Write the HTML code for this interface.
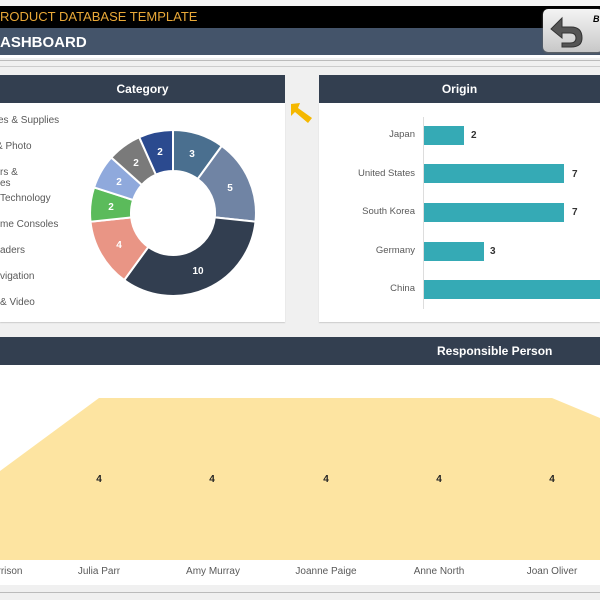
<!DOCTYPE html>
<html><head><style>
body{margin:0;width:600px;height:600px;overflow:hidden;background:#f0f0f0;font-family:"Liberation Sans",sans-serif;position:relative}
.a{position:absolute}
.hd{background:#333f50;color:#fff;font-weight:bold;font-size:12px;text-align:center;line-height:28px}
.lg{position:absolute;font-size:10px;color:#595959;white-space:nowrap}
.bl{position:absolute;font-size:9.5px;color:#595959;text-align:right;width:90px;left:325px}
.bar{position:absolute;background:#35aab5;height:19px;left:424px}
.bv{position:absolute;font-size:10px;font-weight:bold;color:#333}
.pn{position:absolute;font-size:10px;color:#595959;width:100px;text-align:center;top:566px}
.v4{position:absolute;font-size:10px;font-weight:bold;color:#222;top:474px;width:20px;text-align:center}
</style></head><body>
<div class="a" style="left:0;top:0;width:600px;height:6px;background:#f4f4f4"></div>
<div class="a" style="left:0;top:6px;width:600px;height:22px;background:#000;color:#e8a838;font-size:13px;line-height:22px;text-indent:0">RODUCT DATABASE TEMPLATE</div>
<div class="a" style="left:0;top:28px;width:600px;height:27px;background:#44546a;color:#fff;font-size:15px;font-weight:bold;line-height:29px">ASHBOARD</div>
<div class="a" style="left:0;top:55px;width:600px;height:3px;background:#fff"></div>
<div class="a" style="left:0;top:60px;width:600px;height:1px;background:#bbb"></div>
<div class="a" style="left:0;top:66px;width:600px;height:1px;background:#ccc"></div>
<div class="a" style="left:543px;top:9px;width:60px;height:43px;border-radius:5px;background:linear-gradient(#f4f4f4,#c8c8c8);box-shadow:0 1px 2px #666"></div>
<svg class="a" style="left:548px;top:12px" width="40" height="38"><path d="M14 6 L3 17 L14 26 L14 21 L22 21 Q28 21 28 26 Q28 31 22 31 L14 31 L14 35 L23 35 Q34 35 34 26 Q34 15 23 15 L14 15 Z" fill="#555" stroke="#333" stroke-width="1"/></svg>
<div class="a" style="left:593px;top:14px;font-size:9px;font-weight:bold;font-style:italic">B</div>

<div class="a hd" style="left:0;top:75px;width:285px;height:28px">Category</div>
<div class="a" style="left:0;top:103px;width:285px;height:219px;background:#fff;box-shadow:0 1px 1px #ccc"></div>
<div class="lg" style="left:-2px;top:115px">es &amp; Supplies</div>
<div class="lg" style="left:-4px;top:141px">&amp; Photo</div>
<div class="lg" style="left:0;top:167px">rs &amp;</div>
<div class="lg" style="left:0;top:178px">es</div>
<div class="lg" style="left:0;top:193px">Technology</div>
<div class="lg" style="left:0;top:219px">me Consoles</div>
<div class="lg" style="left:0;top:245px">aders</div>
<div class="lg" style="left:0;top:271px">vigation</div>
<div class="lg" style="left:0;top:297px">&amp; Video</div>
<svg class="a" style="left:0;top:0" width="318" height="330" font-family="Liberation Sans" font-size="10" font-weight="bold" fill="#fff" text-anchor="middle">
<g stroke="#fff" stroke-width="2">
<path d="M173 130 A83 83 0 0 1 221.8 145.9 L197.7 179 A42 42 0 0 0 173 171Z" fill="#4a6f8f"/>
<path d="M221.8 145.9 A83 83 0 0 1 255.5 221.7 L214.8 217.4 A42 42 0 0 0 197.7 179Z" fill="#7084a4"/>
<path d="M255.5 221.7 A83 83 0 0 1 124.2 280.1 L148.3 247 A42 42 0 0 0 214.8 217.4Z" fill="#323e50"/>
<path d="M124.2 280.1 A83 83 0 0 1 90.5 221.7 L131.2 217.4 A42 42 0 0 0 148.3 247Z" fill="#e99585"/>
<path d="M90.5 221.7 A83 83 0 0 1 94.1 187.4 L133.1 200 A42 42 0 0 0 131.2 217.4Z" fill="#5bbb5b"/>
<path d="M94.1 187.4 A83 83 0 0 1 111.3 157.5 L141.8 184.9 A42 42 0 0 0 133.1 200Z" fill="#8fa9dc"/>
<path d="M111.3 157.5 A83 83 0 0 1 139.2 137.2 L155.9 174.6 A42 42 0 0 0 141.8 184.9Z" fill="#7a7a7a"/>
<path d="M139.2 137.2 A83 83 0 0 1 173 130 L173 171 A42 42 0 0 0 155.9 174.6Z" fill="#2b4a8f"/>
</g>
<text x="192" y="157">3</text><text x="230" y="191">5</text><text x="198" y="274">10</text><text x="119" y="248">4</text><text x="111" y="210">2</text><text x="119" y="185">2</text><text x="136" y="166">2</text><text x="160" y="155">2</text>
<path d="M291 104 L300 103 L298 108 L312 118 L308 123 L295 112 L291 116 Z" fill="#f5b800"/>
</svg>

<div class="a hd" style="left:319px;top:75px;width:281px;height:28px">Origin</div>
<div class="a" style="left:319px;top:103px;width:281px;height:219px;background:#fff;box-shadow:0 1px 1px #ccc"></div>
<div class="a" style="left:423px;top:117px;width:1px;height:192px;background:#ddd"></div>
<div class="bl" style="top:129px">Japan</div><div class="bar" style="top:126px;width:40px"></div><div class="bv" style="left:471px;top:130px">2</div>
<div class="bl" style="top:168px">United States</div><div class="bar" style="top:164px;width:140px"></div><div class="bv" style="left:572px;top:169px">7</div>
<div class="bl" style="top:206px">South Korea</div><div class="bar" style="top:203px;width:140px"></div><div class="bv" style="left:572px;top:207px">7</div>
<div class="bl" style="top:245px">Germany</div><div class="bar" style="top:242px;width:60px"></div><div class="bv" style="left:490px;top:246px">3</div>
<div class="bl" style="top:283px">China</div><div class="bar" style="top:280px;width:176px"></div>

<div class="a hd" style="left:0;top:337px;width:600px;height:28px;text-align:left;text-indent:437px">Responsible Person</div>
<div class="a" style="left:0;top:365px;width:600px;height:220px;background:#fff"></div>
<svg class="a" style="left:0;top:365px" width="600" height="200"><path d="M0 106 L99 33 L552 33 L600 53 L600 195 L0 195Z" fill="#fde4a1"/></svg>
<div class="v4" style="left:89px">4</div><div class="v4" style="left:202px">4</div><div class="v4" style="left:316px">4</div><div class="v4" style="left:429px">4</div><div class="v4" style="left:542px">4</div>
<div class="pn" style="left:-40px">rrison</div>
<div class="pn" style="left:49px">Julia Parr</div>
<div class="pn" style="left:163px">Amy Murray</div>
<div class="pn" style="left:276px">Joanne Paige</div>
<div class="pn" style="left:389px">Anne North</div>
<div class="pn" style="left:502px">Joan Oliver</div>
<div class="a" style="left:0;top:592px;width:600px;height:1px;background:#bbb"></div>
</body></html>
